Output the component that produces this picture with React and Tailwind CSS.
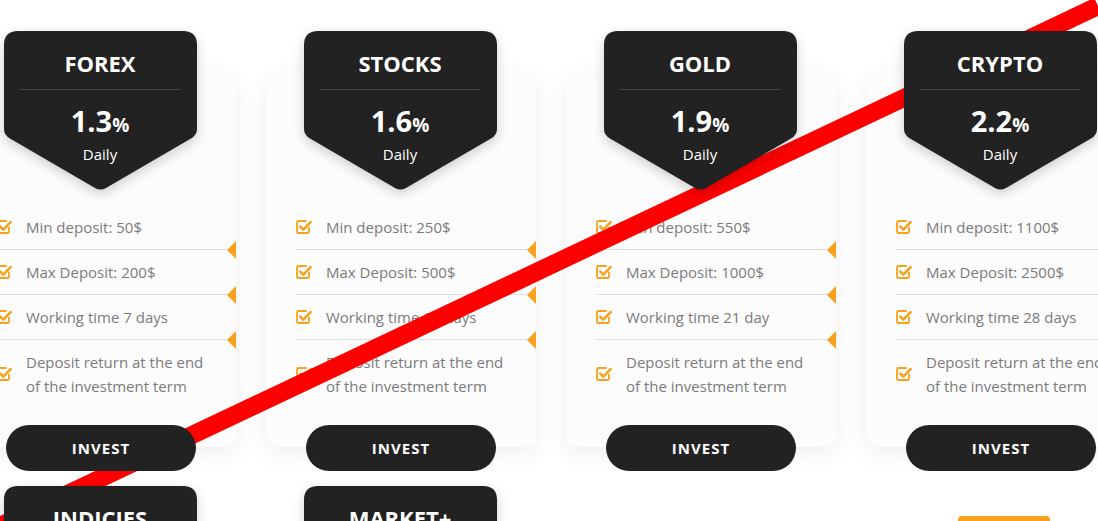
import React from 'react';

const PLANS = [
  {
    name: 'FOREX',
    rate: '1.3',
    items: ['Min deposit: 50$', 'Max Deposit: 200$', 'Working time 7 days'],
  },
  {
    name: 'STOCKS',
    rate: '1.6',
    items: ['Min deposit: 250$', 'Max Deposit: 500$', 'Working time 14 days'],
  },
  {
    name: 'GOLD',
    rate: '1.9',
    items: ['Min deposit: 550$', 'Max Deposit: 1000$', 'Working time 21 day'],
  },
  {
    name: 'CRYPTO',
    rate: '2.2',
    items: ['Min deposit: 1100$', 'Max Deposit: 2500$', 'Working time 28 days'],
  },
];

const CheckIcon = () => (
  <svg width="16" height="16" viewBox="0 0 16 16" fill="none" className="shrink-0">
    <path
      d="M13 8.5V12.5a1.5 1.5 0 0 1-1.5 1.5h-9A1.5 1.5 0 0 1 1 12.5v-9A1.5 1.5 0 0 1 2.5 2H10"
      stroke="#f8a11c"
      strokeWidth="1.8"
      strokeLinecap="round"
    />
    <path
      d="M4.3 7.6l3 3L14.6 3.2"
      stroke="#f8a11c"
      strokeWidth="2.6"
      strokeLinecap="round"
      strokeLinejoin="round"
    />
  </svg>
);

const Badge = ({ name, rate }) => (
  <div className="relative z-10 mr-[2px] w-[193px] h-[160px] text-white text-center">
    {/* pentagon backdrop */}
    <svg
      width="193"
      height="160"
      viewBox="0 0 193 160"
      className="absolute inset-0 drop-shadow-[0_4px_6px_rgba(0,0,0,0.18)]"
    >
      <path
        d="M14 0H179Q193 0 193 14V98Q193 104 187 107.5L102 157Q96.5 160 91 157L6 107.5Q0 104 0 98V14Q0 0 14 0Z"
        fill="#222222"
      />
    </svg>
    <div className="relative flex flex-col items-center pt-[17px]">
      <h3 className="text-[22px] leading-[30px] font-bold">{name}</h3>
      <div className="mt-[11px] w-[160px] h-px bg-[#474747]" />
      <p className="mt-[13px] text-[29px] leading-[36px] font-bold">
        {rate}
        <span className="text-[19px]">%</span>
      </p>
      <p className="mt-px text-[15px] leading-[20px]">Daily</p>
    </div>
  </div>
);

const PlanCard = ({ plan }) => (
  <div className="flex flex-col items-center">
    <Badge name={plan.name} rate={plan.rate} />

    <div className="-mt-[118px] w-[270px] rounded-[10px] bg-[#fcfcfc] shadow-[0_6px_24px_rgba(0,0,0,0.07)] pt-[132px] pb-[39px] pl-[30px]">
      <ul>
        {plan.items.map((item) => (
          <li
            key={item}
            className="relative flex items-center gap-[14px] py-[10px] border-b border-[#dedede] text-[15px] leading-[24px] text-[#7b7b7b]"
          >
            <CheckIcon />
            <span>{item}</span>
            <span className="absolute right-0 -bottom-[10px] w-0 h-0 border-y-[9px] border-y-transparent border-r-[9px] border-r-[#f8a11c]" />
          </li>
        ))}
        <li className="flex items-center gap-[14px] py-[10px] text-[15px] leading-[24px] text-[#7b7b7b]">
          <CheckIcon />
          <span>
            Deposit return at the end
            <br />
            of the investment term
          </span>
        </li>
      </ul>
    </div>

    <button className="relative z-10 -mt-[22px] w-[190px] h-[46px] rounded-full bg-[#222222] text-white text-[15px] font-bold tracking-[1px]">
      INVEST
    </button>
  </div>
);

export default function App() {
  return (
    <div className="relative w-full h-[521px] overflow-hidden bg-white font-['Open_Sans',sans-serif]">
      <div className="-ml-[34px] pt-[31px] grid grid-cols-[repeat(4,270px)] gap-x-[30px] gap-y-[15px]">
        {PLANS.map((plan) => (
          <PlanCard key={plan.name} plan={plan} />
        ))}

        <div className="flex justify-center">
          <Badge name="INDICIES" rate="2.5" />
        </div>
        <div className="flex justify-center">
          <Badge name="MARKET+" rate="3.0" />
        </div>
        <div />
        <div className="flex justify-center pt-[30px] pl-[6px]">
          <div className="w-[92px] h-[40px] rounded-t-[4px] bg-[#f8a11c]" />
        </div>
      </div>

      {/* red strike across the shot */}
      <svg
        className="absolute inset-0 pointer-events-none"
        width="1098"
        height="521"
        viewBox="0 0 1098 521"
      >
        <line x1="0" y1="526" x2="1098" y2="6" stroke="#ff0000" strokeWidth="18" />
      </svg>
    </div>
  );
}
